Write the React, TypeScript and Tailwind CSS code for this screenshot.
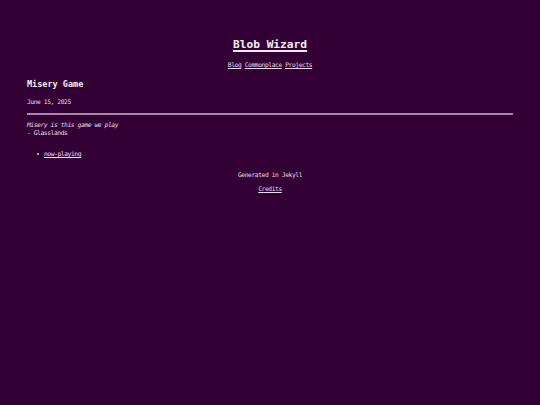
import React from "react";

export default function App() {
  return (
    <div
      className="min-h-[405px] w-full bg-[#330036] text-[#e6dce6]"
      style={{ fontFamily: '"DejaVu Sans Mono", "Liberation Mono", monospace' }}
    >
      <div className="px-[27px] pt-[31px]">
        <div className="text-center">
          <a href="#" className="text-[11.2px] font-bold leading-[14px] underline decoration-[1.5px] underline-offset-[2px] text-[#f4eef4]">
            Blob Wizard
          </a>
        </div>
        <div className="mt-[6px] flex justify-center gap-[3.4px] text-[6.3px] tracking-[-0.42px] leading-[8px]">
          <a href="#" className="underline">Blog</a>
          <a href="#" className="underline">Commonplace</a>
          <a href="#" className="underline">Projects</a>
        </div>
        <h1 className="mt-[9px] text-[8.5px] font-bold leading-[12px] text-[#f4eef4]">Misery Game</h1>
        <div className="mt-[8px] text-[6.3px] tracking-[-0.42px] leading-[8px]">June 15, 2025</div>
        <div className="mt-[7px] h-[2px] bg-[#a58aa8]" />
        <div className="mt-[6px] text-[6.3px] tracking-[-0.42px] leading-[8px]">
          <div className="italic">Misery is this game we play</div>
          <div>- Glasslands</div>
        </div>
        <ul className="mt-[13px] pl-[10px] text-[6.3px] tracking-[-0.42px] leading-[8px]">
          <li className="flex items-center gap-[5px]">
            <span className="h-[2px] w-[2px] rounded-full bg-[#e6dce6]" />
            <a href="#" className="underline">now-playing</a>
          </li>
        </ul>
        <div className="mt-[13px] text-center text-[6.3px] tracking-[-0.42px] leading-[8px]">Generated in Jekyll</div>
        <div className="mt-[6px] text-center text-[6.3px] tracking-[-0.42px] leading-[8px]">
          <a href="#" className="underline">Credits</a>
        </div>
      </div>
    </div>
  );
}
